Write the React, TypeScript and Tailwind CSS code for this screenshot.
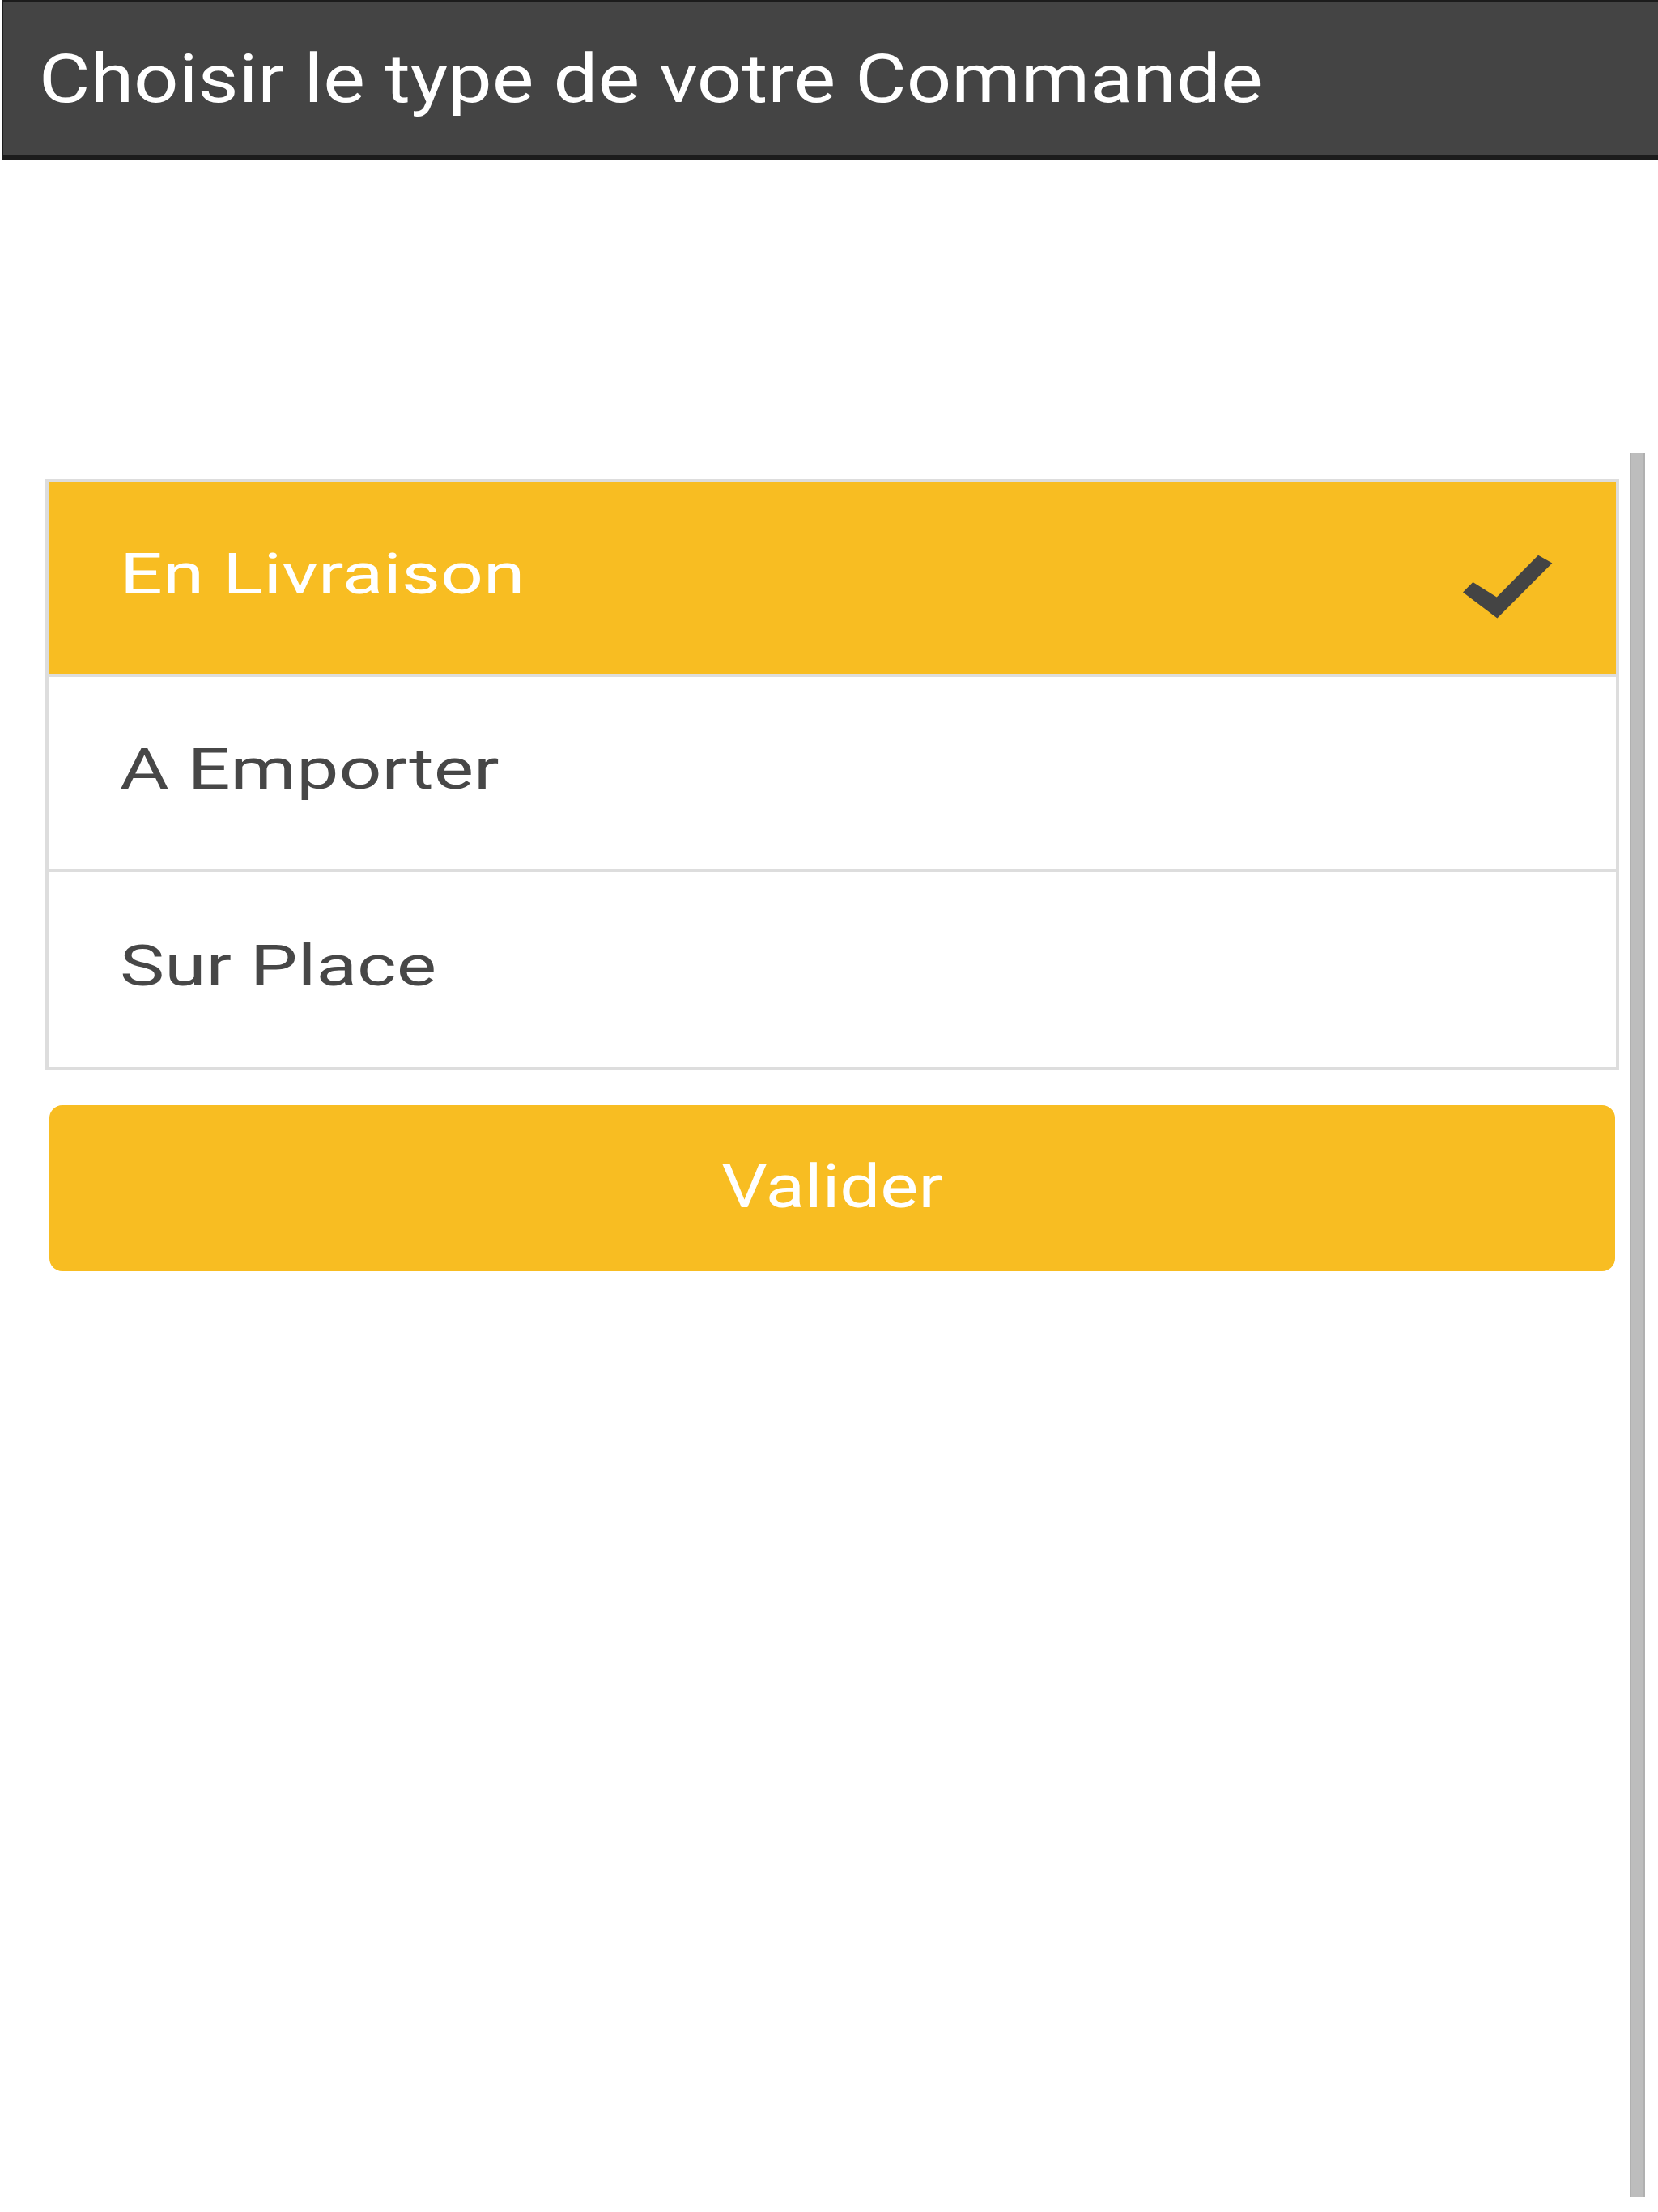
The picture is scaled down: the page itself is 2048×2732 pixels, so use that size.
const options = [
    { label: 'En Livraison', selected: true },
    { label: 'A Emporter', selected: false },
    { label: 'Sur Place', selected: false },
];

const Check = () => (
    <svg viewBox="0 0 340 240" className="w-[111px] h-[80px] mt-[22px] flex-shrink-0">
        <path d="M38 102 L128 158 L285 0 L338 30 L130 238 L0 140 Z" fill="#444444" />
    </svg>
);

const App = () => {
    return (
        <div className="relative w-[2048px] min-h-[2732px] bg-white pl-[2px] font-['Roboto','Liberation_Sans',sans-serif]">
            {/* Title bar */}
            <header className="h-[197px] flex items-center bg-[#444444] border-t-[3px] border-l-[2px] border-b-[5px] border-[#1c1c1c] pl-[44px]">
                <h1 className="text-[84px] leading-none text-white origin-left scale-x-[1.16] whitespace-nowrap">
                    Choisir le type de votre Commande
                </h1>
            </header>

            <main className="pt-[394px] pl-[54px] pr-[48px]">
                {/* Order type list */}
                <ul className="border-4 border-[#dddddd] bg-white">
                    {options.map((opt, idx) => (
                        <li
                            key={opt.label}
                            className={`h-[241px] flex items-center justify-between pl-[88px] pr-[78px] ${idx < options.length - 1 ? 'border-b-4 border-[#dddddd]' : ''} ${opt.selected ? 'bg-[#f8bd22] text-white' : 'bg-white text-[#474747]'}`}
                        >
                            <span className="text-[71px] leading-none mb-[10px] origin-left scale-x-[1.31] whitespace-nowrap">{opt.label}</span>
                            {opt.selected && <Check />}
                        </li>
                    ))}
                </ul>

                <button className="mt-[43px] mx-[5px] w-[calc(100%-10px)] h-[205px] rounded-[16px] bg-[#f8bd22] text-white flex items-center justify-center">
                    <span className="text-[74px] leading-none mb-[4px] scale-x-[1.2]">Valider</span>
                </button>
            </main>

            {/* Scroll indicator */}
            <div className="absolute right-[16px] top-[560px] w-[19px] h-[2154px] bg-[#bdbdbd] border-x-2 border-[#b0b0b0]"></div>
        </div>
    );
};

export default App;
